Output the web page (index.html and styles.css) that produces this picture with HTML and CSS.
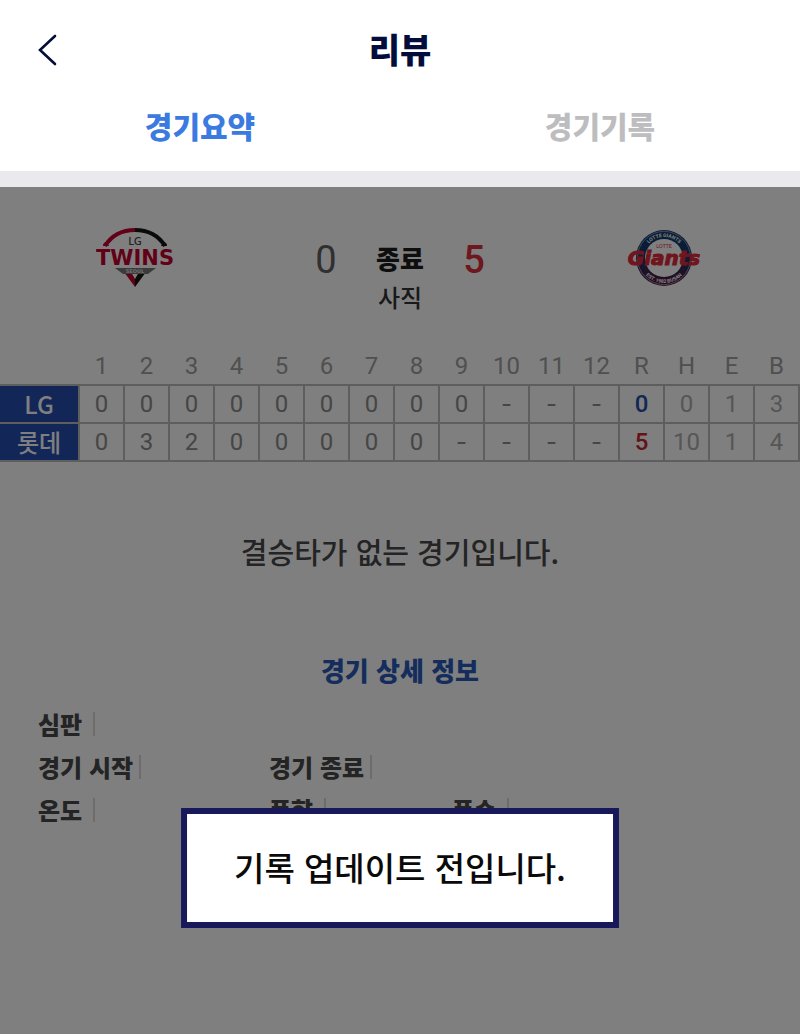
FILE: index.html
```html
<!DOCTYPE html>
<html lang="ko">
<head>
<meta charset="utf-8">
<meta name="viewport" content="width=device-width, initial-scale=1">
<title>리뷰</title>
<link rel="stylesheet" href="styles.css">
</head>
<body>
<header class="top">
  <div class="bar">
    <button class="back" type="button" aria-label="뒤로">
      <svg width="20" height="34" viewBox="0 0 20 34" fill="none" stroke="#020d3b" stroke-width="2.6" stroke-linecap="round"><path d="M17 4 2 18 17 32"/></svg>
    </button>
    <h1 class="title">리뷰</h1>
  </div>
  <nav class="tabs">
    <button class="tab active" type="button">경기요약</button>
    <button class="tab" type="button">경기기록</button>
  </nav>
</header>

<main class="content">
  <section class="score">
    <svg class="logo" width="80" height="64" viewBox="0 0 80 64" role="img" aria-label="LG Twins">
      <path d="M9 20Q19 4 39 4" fill="none" stroke="#c4002f" stroke-width="4"/>
      <path d="M39 4Q59 4 69 20" fill="none" stroke="#151515" stroke-width="4"/>
      <path d="M7 20q0-4 4-4l2 4Z" fill="#c4002f"/>
      <path d="M71 20q0-4-4-4l-2 4Z" fill="#151515"/>
      <path d="m28 46 11 15v-8l-4-7Z" fill="#c4002f"/>
      <path d="M39 61v-8l4-7h7Z" fill="#151515"/>
      <path d="M19 42h41l-8 6H27Z" fill="#777"/>
      <text x="39" y="19" class="mark mark-lg">LG</text>
      <text x="39" y="39" class="mark mark-twins">TWINS</text>
      <text x="39" y="47" class="mark mark-seoul">SEOUL</text>
    </svg>
    <span class="runs">0</span>
    <div class="state"><strong class="status">종료</strong><span class="venue">사직</span></div>
    <span class="runs win">5</span>
    <svg class="logo" width="80" height="64" viewBox="0 0 80 64" role="img" aria-label="Lotte Giants">
      <defs>
        <path id="arc-top" d="M19 32a21 21 0 0 1 42 0"/>
        <path id="arc-low" d="M15 32a25 25 0 0 0 50 0"/>
        <linearGradient id="ring" x2="0" y2="1"><stop offset=".45" stop-color="#123a6c"/><stop offset="1" stop-color="#5c1238"/></linearGradient>
      </defs>
      <circle cx="40" cy="32" r="28" fill="url(#ring)"/>
      <circle cx="40" cy="32" r="26.600" fill="none" stroke="#9ab" stroke-width=".8"/>
      <circle cx="40" cy="32" r="19" fill="#fff"/>
      <text class="mark mark-ring"><textPath href="#arc-top" startOffset="50%">LOTTE GIANTS</textPath></text>
      <text class="mark mark-ring"><textPath href="#arc-low" startOffset="50%">EST. 1982 BUSAN</textPath></text>
      <text x="40" y="22" class="mark mark-lotte">LOTTE</text>
      <text x="40" y="39" class="mark mark-giants">Giants</text>
    </svg>
  </section>

  <table class="board">
    <thead>
      <tr><td class="team-col"></td><th>1</th><th>2</th><th>3</th><th>4</th><th>5</th><th>6</th><th>7</th><th>8</th><th>9</th><th>10</th><th>11</th><th>12</th><th>R</th><th>H</th><th>E</th><th>B</th></tr>
    </thead>
    <tbody>
      <tr><th class="team" scope="row">LG</th><td>0</td><td>0</td><td>0</td><td>0</td><td>0</td><td>0</td><td>0</td><td>0</td><td>0</td><td class="none">-</td><td class="none">-</td><td class="none">-</td><td class="total lost">0</td><td class="sub">0</td><td class="sub">1</td><td class="sub">3</td></tr>
      <tr><th class="team" scope="row">롯데</th><td>0</td><td>3</td><td>2</td><td>0</td><td>0</td><td>0</td><td>0</td><td>0</td><td class="none">-</td><td class="none">-</td><td class="none">-</td><td class="none">-</td><td class="total won">5</td><td class="sub">10</td><td class="sub">1</td><td class="sub">4</td></tr>
    </tbody>
  </table>

  <p class="note">결승타가 없는 경기입니다.</p>

  <section class="details">
    <h2 class="heading">경기 상세 정보</h2>
    <div class="info">
      <div class="item">심판</div>
    </div>
    <div class="info">
      <div class="item close">경기 시작</div><div class="item close">경기 종료</div>
    </div>
    <div class="info">
      <div class="item">온도</div><div class="item">풍향</div><div class="item">풍속</div>
    </div>
  </section>
  <div class="shade"></div>
</main>

<div class="toast" role="alert">기록 업데이트 전입니다.</div>
</body>
</html>
```
FILE: styles.css
```css
* { box-sizing: border-box; }

body {
  margin: 0;
  min-height: 100vh;
  display: flex;
  flex-direction: column;
  position: relative;
  background: #fff;
  font-family: "Noto Sans CJK KR", sans-serif;
}

button {
  border: 0;
  padding: 0;
  background: none;
  font: inherit;
  cursor: pointer;
}

.top { border-bottom: 16px solid #eaeaee; }

.bar {
  display: grid;
  grid-template-columns: 1fr auto 1fr;
  align-items: center;
  padding: 23px 38px 0;
}

.back { justify-self: start; display: flex; }

.title {
  margin: 0;
  font-size: 34px;
  line-height: 52px;
  font-weight: 900;
  color: #020d3b;
}

.tabs {
  display: grid;
  grid-template-columns: 1fr 1fr;
  padding: 22px 0 18px;
}

.tab {
  font-size: 30px;
  line-height: 56px;
  font-weight: 900;
  color: #bdbdbf;
}

.tab.active { color: #3b7ae0; }

.content {
  flex: 1;
  position: relative;
}

.shade {
  position: absolute;
  inset: 0;
  background: rgba(0, 0, 0, .5);
}

.score {
  display: grid;
  grid-template-columns: 1fr 64px 84px 64px 1fr;
  align-items: start;
  padding: 39px 96px 32px;
}

.logo:last-child { justify-self: end; }

.mark { text-anchor: middle; font-family: "DejaVu Sans", sans-serif; font-weight: 700; }
.mark-lg { font-family: "Noto Sans", sans-serif; font-size: 11px; font-weight: 500; fill: #444; }
.mark-twins { font-size: 21px; fill: #c4002f; }
.mark-seoul { font-size: 5px; fill: #ddd; }
.mark-ring { font-family: Roboto, sans-serif; font-size: 5px; fill: #fff; }
.mark-lotte { font-size: 5px; font-weight: 400; fill: #d9293c; }
.mark-giants {
  font-size: 20px;
  font-style: italic;
  fill: #e0283c;
  stroke: #e0283c;
  stroke-width: 1px;
}

.runs {
  font-family: Roboto, sans-serif;
  font-size: 38px;
  line-height: 68px;
  text-align: center;
  color: #606060;
}

.runs.win { color: #dc303c; font-weight: 500; }

.state {
  display: flex;
  flex-direction: column;
  align-items: center;
  padding-top: 12px;
}

.status { font-size: 26px; line-height: 40px; font-weight: 900; color: #1c1c1c; }
.venue { font-size: 24px; line-height: 38px; font-weight: 500; color: #333; }

.board {
  width: 100%;
  table-layout: fixed;
  border-collapse: collapse;
  font: 24px/36px Roboto, sans-serif;
  color: #a0a0a0;
  text-align: center;
}

.board th, .board td { padding: 0; }
.board th { font-weight: 400; }
.board .team-col { width: 79px; }

.board tbody th, .board tbody td {
  border: 2px solid #bcbcbc;
  color: #8c8c8c;
}

.board tbody .team {
  border-left: 0;
  background: #244cb0;
  color: #fff;
  font-family: "Noto Sans CJK KR", sans-serif;
  font-weight: 500;
}

.board tbody .none { font-family: Inter, sans-serif; }
.board tbody .sub { color: #acacac; }
.board tbody .total { font-weight: 500; }
.board tbody .lost { color: #2450a8; }
.board tbody .won { color: #c82830; }

.note {
  margin: 67px 0 0;
  font-size: 29px;
  line-height: 44px;
  font-weight: 500;
  text-align: center;
  color: #484848;
}

.heading {
  margin: 0;
  padding: 77px 0 16px;
  font-size: 26px;
  line-height: 40px;
  font-weight: 900;
  text-align: center;
  color: #2a5ab8;
}

.details { padding: 0 38px; }

.info {
  display: grid;
  grid-template-columns: 231px 183px 1fr;
  padding-bottom: 7px;
}

.item {
  display: flex;
  align-items: center;
  gap: 11px;
  font-size: 24px;
  line-height: 36px;
  font-weight: 900;
  color: #484848;
}

.item.close { gap: 6px; }

.item::after {
  content: "";
  height: 24px;
  border-left: 2px solid #d8d8d8;
}

.toast {
  position: absolute;
  left: 50%;
  bottom: 106px;
  transform: translateX(-50%);
  padding: 28px 47px 30px;
  border: 6px solid #17195b;
  background: #fff;
  font-size: 33px;
  line-height: 50px;
  font-weight: 500;
  white-space: nowrap;
  color: #0a0a0a;
}
```
